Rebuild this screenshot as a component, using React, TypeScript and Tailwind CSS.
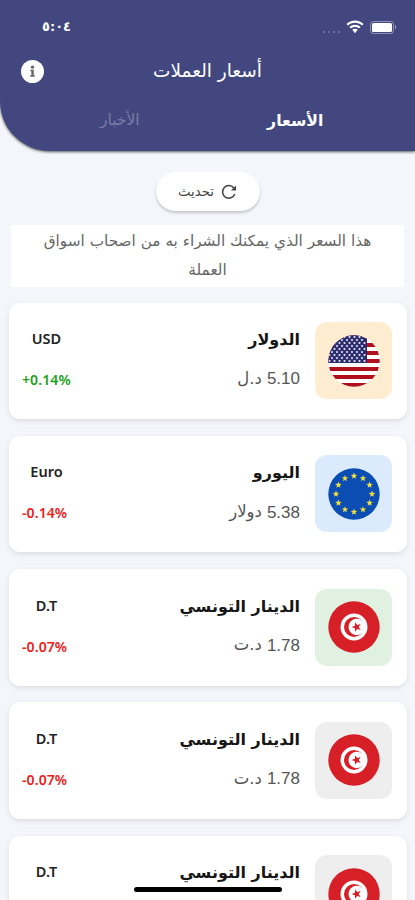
import clsx from 'clsx';

type Rate = {
  name: string;
  amount: string;
  unit: string;
  code: string;
  change: string;
  flag: 'us' | 'eu' | 'tn';
  tile: string;
};

const rates: Rate[] = [
  { name: 'الدولار', amount: '5.10', unit: 'د.ل', code: 'USD', change: '+0.14%', flag: 'us', tile: 'bg-[#ffecd1]' },
  { name: 'اليورو', amount: '5.38', unit: 'دولار', code: 'Euro', change: '-0.14%', flag: 'eu', tile: 'bg-[#dbebfd]' },
  { name: 'الدينار التونسي', amount: '1.78', unit: 'د.ت', code: 'D.T', change: '-0.07%', flag: 'tn', tile: 'bg-[#e1f1e1]' },
  { name: 'الدينار التونسي', amount: '1.78', unit: 'د.ت', code: 'D.T', change: '-0.07%', flag: 'tn', tile: 'bg-[#eeeeee]' },
  { name: 'الدينار التونسي', amount: '1.78', unit: 'د.ت', code: 'D.T', change: '-0.07%', flag: 'tn', tile: 'bg-[#eeeeee]' },
];

function starPoints(cx: number, cy: number, r: number, turn = -90) {
  return Array.from({ length: 10 }, (_, i) => {
    const a = ((turn + i * 36) * Math.PI) / 180;
    const d = i % 2 ? r * 0.42 : r;
    return `${(cx + d * Math.cos(a)).toFixed(2)},${(cy + d * Math.sin(a)).toFixed(2)}`;
  }).join(' ');
}

function UsFlag() {
  return (
    <svg viewBox="0 0 52 52" className="size-[52px]">
      <clipPath id="us-round"><circle cx="26" cy="26" r="25.7" /></clipPath>
      <g clipPath="url(#us-round)">
        <rect width="52" height="52" fill="#fff" />
        {[0, 1, 2, 3, 4, 5, 6].map((i) => (
          <rect key={ i } y={ i * 8 } width="52" height="4" fill="#b0101e" />
        ))}
        <rect width="39" height="28" fill="#28286e" />
        {Array.from({ length: 9 }, (_, row) => (
          Array.from({ length: row % 2 ? 7 : 8 }, (__, col) => (
            <polygon
              key={ `${row}-${col}` }
              points={ starPoints(1.5 + col * 5 + (row % 2) * 2.5, 2 + row * 3, 1.6) }
              fill="#fff"
            />
          ))
        ))}
      </g>
    </svg>
  );
}

function EuFlag() {
  return (
    <svg viewBox="0 0 52 52" className="size-[52px]">
      <circle cx="26" cy="26" r="25.7" fill="#0b4db3" />
      {Array.from({ length: 12 }, (_, i) => {
        const a = (i * Math.PI) / 6;
        return (
          <polygon
            key={ i }
            points={ starPoints(26 + 18 * Math.cos(a), 26 + 18 * Math.sin(a), 3.4) }
            fill="#f5e03c"
          />
        );
      })}
    </svg>
  );
}

function TnFlag() {
  return (
    <svg viewBox="0 0 52 52" className="size-[52px]">
      <circle cx="26" cy="26" r="25.7" fill="#d71f28" />
      <circle cx="26" cy="26" r="13.5" fill="#fff" />
      <circle cx="26" cy="26" r="10" fill="#d71f28" />
      <circle cx="28.7" cy="26" r="8.2" fill="#fff" />
      <polygon points={ starPoints(28.6, 26, 5, 180) } fill="#d71f28" />
    </svg>
  );
}

function Header() {
  return (
    <header className="h-[151px] shrink-0 rounded-bl-[50px] bg-[#42477f] text-white shadow-[0_1px_3px_rgba(0,0,0,0.65)]">
      <div dir="ltr" className="flex h-[52px] items-center justify-between pl-[42px] pr-[19px] pt-[2px]">
        <span className="text-[13px] font-bold">٥:٠٤</span>
        <div className="flex items-center">
          <div className="mr-[6px] mt-[9px] flex gap-[3px]">
            {[0, 1, 2, 3].map((i) => (
              <i key={ i } className="size-[2px] rounded-full bg-white/30" />
            ))}
          </div>
          <svg viewBox="0 0 18 14" className="mr-[6px] h-[14px] w-[18px]" fill="#fff">
            <path d="M9 .5C5.700.5 2.700 1.800.5 3.900l1.500 1.600C3.900 3.800 6.300 2.800 9 2.800s5.100 1 7 2.700l1.500-1.600C15.300 1.800 12.300.5 9 .5z" />
            <path d="M9 4.700c-2.200 0-4.100.8-5.600 2.200l1.600 1.600c1-1 2.400-1.500 4-1.500s3 .5 4 1.500l1.600-1.600C13.100 5.500 11.200 4.700 9 4.700z" />
            <path d="M9 8.700c-1.100 0-2 .4-2.700 1.100L9 13.300l2.700-3.500C11 9.100 10.100 8.700 9 8.700z" />
          </svg>
          <div className="h-[13px] w-[24px] rounded-[3.5px] border border-white/40 p-px">
            <div className="size-full rounded-[1.5px] bg-white" />
          </div>
          <i className="ml-px h-[4px] w-[1.5px] rounded-r-full bg-white/50" />
        </div>
      </div>
      <div dir="ltr" className="grid h-[38px] grid-cols-[64px_1fr_64px] items-center">
        <svg viewBox="0 0 24 24" className="ml-[21px] size-[23px]">
          <circle cx="12" cy="12" r="12" fill="#fff" />
          <circle cx="12" cy="7.5" r="1.7" fill="#666" />
          <path d="M9.800 10.300H13.300V16H14.400V17.500H9.600V16H10.800V11.800H9.800z" fill="#666" />
        </svg>
        <h1 dir="rtl" className="text-center text-[18.5px]">أسعار العملات</h1>
      </div>
      <nav className="grid h-[62px] grid-cols-2 items-center px-[32px] text-center">
        <span className="text-[15.7px] font-semibold">الأسعار</span>
        <span className="text-[15.5px] text-white/30">الأخبار</span>
      </nav>
    </header>
  );
}

function RateCard({ rate }: { rate: Rate }) {
  const up = rate.change.startsWith('+');
  return (
    <article className="flex h-[116.5px] shrink-0 rounded-[11px] bg-white pl-[13px] pr-[15px] pt-[19.5px] shadow-[0_2px_5px_rgba(0,0,0,0.1)]">
      <div className={ clsx('flex size-[77px] items-center justify-center rounded-[12px]', rate.tile) }>
        {rate.flag === 'us' && <UsFlag />}
        {rate.flag === 'eu' && <EuFlag />}
        {rate.flag === 'tn' && <TnFlag />}
      </div>
      <div className="mr-[15px] flex-1 whitespace-nowrap">
        <h2 className="h-[38px] text-[16px] font-bold leading-[36px] text-[#161616]">{rate.name}</h2>
        <p className="flex h-[38px] items-center gap-[5px] text-[#555]">
          <span className="font-['Liberation_Sans',sans-serif] text-[17px]">{rate.amount}</span>
          <span className="text-[16.5px]">{rate.unit}</span>
        </p>
      </div>
      <div dir="ltr" className="w-[49px] text-center font-['Noto_Sans',sans-serif]">
        <div className="h-[41px] text-[14.5px] font-semibold leading-[32px] text-[#222]">{rate.code}</div>
        <div className={ clsx('whitespace-nowrap text-left text-[14px] font-semibold leading-[33px] tracking-[0.1px]', up ? 'text-[#20a020]' : 'text-[#ed2020]') }>
          {rate.change}
        </div>
      </div>
    </article>
  );
}

export default function App() {
  return (
    <div dir="rtl" className="relative flex h-[900px] w-[415px] flex-col overflow-hidden bg-[#f4f6fb] font-['DejaVu_Sans',sans-serif]">
      <Header />
      <button type="button" className="mt-[21px] flex h-[39px] w-[104px] shrink-0 items-center justify-center gap-[7px] self-center rounded-full bg-white text-[13.3px] text-[#444] shadow-[0_2px_3px_rgba(0,0,0,0.2)]">
        <svg viewBox="0 0 16 16" className="size-[16px]" fill="none" stroke="#444" strokeWidth="1.5">
          <path d="M13.800 10A6.300 6.300 0 1 1 12.800 4L14 5.500" />
          <path d="M15 1.500V6.500H10z" fill="#444" stroke="none" />
        </svg>
        تحديث
      </button>
      <p className="mx-[11px] mt-[14px] h-[62px] shrink-0 whitespace-nowrap bg-white pt-[2px] text-center text-[15.3px] leading-[29px] text-[#666]">
        هذا السعر الذي يمكنك الشراء به من اصحاب اسواق
        <br />
        العملة
      </p>
      <main className="mt-[15.5px] flex flex-col gap-[16.8px] pl-[9px] pr-[8px]">
        {rates.map((rate, i) => (
          <RateCard key={ i } rate={ rate } />
        ))}
      </main>
      <div className="absolute left-[134px] top-[887px] h-[5px] w-[148px] rounded-full bg-black" />
    </div>
  );
}
